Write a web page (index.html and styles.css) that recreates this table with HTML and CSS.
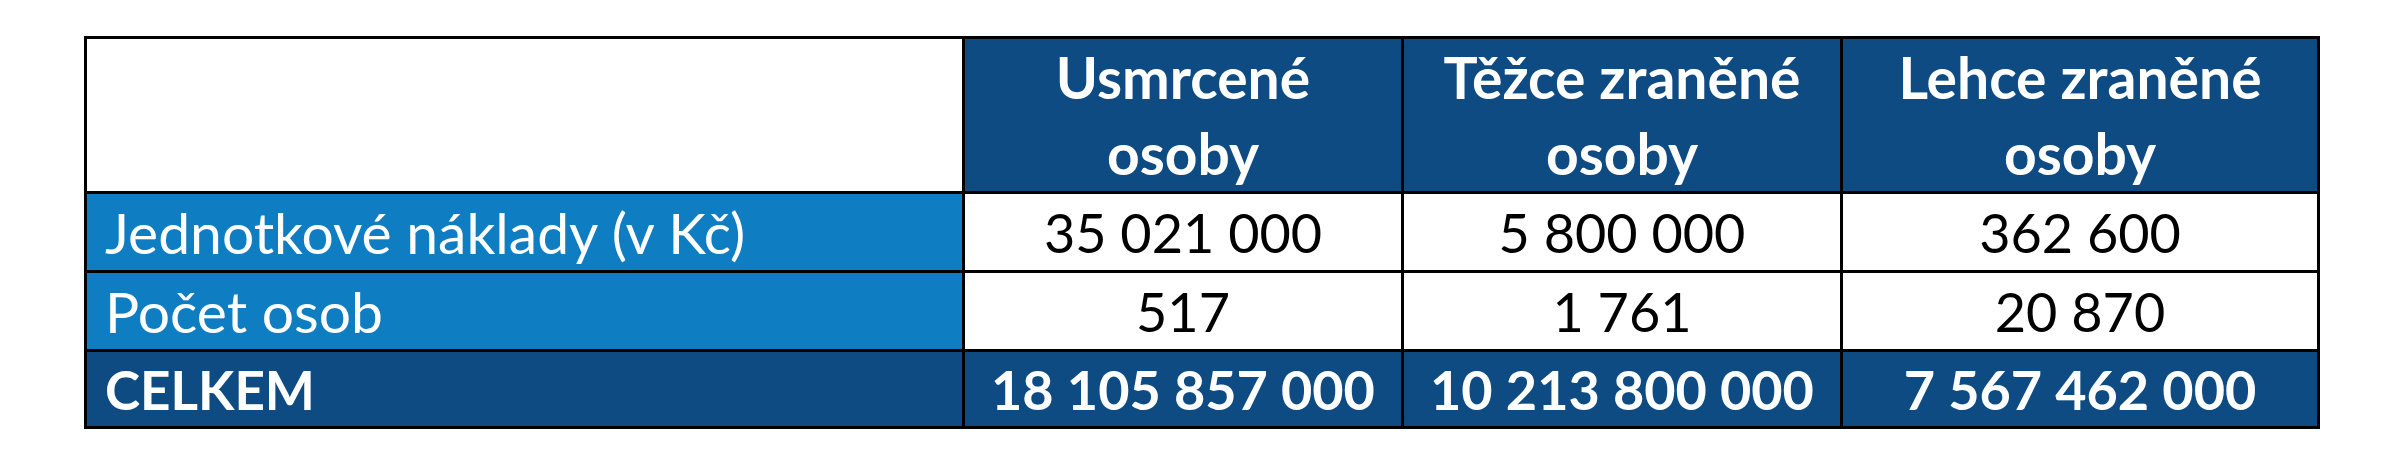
FILE: index.html
```html
<!DOCTYPE html>
<html lang="cs">
<head>
<meta charset="utf-8">
<title>Náklady nehod</title>
<link rel="stylesheet" href="styles.css">
</head>
<body>
<table class="costs">
  <colgroup>
    <col class="c-label">
    <col class="c-val">
    <col class="c-val">
    <col class="c-last">
  </colgroup>
  <thead>
    <tr class="row-head">
      <th class="blank"></th>
      <th>Usmrcené<br>osoby</th>
      <th>Těžce zraněné<br>osoby</th>
      <th>Lehce zraněné<br>osoby</th>
    </tr>
  </thead>
  <tbody>
    <tr class="row-data">
      <th class="label">Jednotkové náklady (v Kč)</th>
      <td>35 021 000</td>
      <td>5 800 000</td>
      <td>362 600</td>
    </tr>
    <tr class="row-data">
      <th class="label">Počet osob</th>
      <td>517</td>
      <td>1 761</td>
      <td>20 870</td>
    </tr>
    <tr class="row-total">
      <th class="label">CELKEM</th>
      <td>18 105 857 000</td>
      <td>10 213 800 000</td>
      <td>7 567 462 000</td>
    </tr>
  </tbody>
</table>
</body>
</html>
```
FILE: styles.css
```css
html, body {
  margin: 0;
  padding: 0;
  background: #ffffff;
}

body {
  padding: 36px 0 0 84px;
}

.costs {
  border-collapse: collapse;
  table-layout: fixed;
  width: 2233px;
  font-family: Lato, "Noto Sans", sans-serif;
  font-size: 54px;
}

.c-label { width: 878px; }
.c-val { width: 439px; }
.c-last { width: 477px; }

.costs th,
.costs td {
  border: 3px solid #000000;
  padding: 0;
  text-align: center;
  vertical-align: middle;
  white-space: nowrap;
}

.row-head { height: 153px; }
.row-head th {
  background: #0f4b83;
  color: #ffffff;
  font-size: 57px;
  font-weight: 700;
  line-height: 76px;
}
.row-head th.blank { background: #ffffff; }

.row-data { height: 79px; }
.row-data td {
  background: #ffffff;
  color: #000000;
  font-weight: 400;
}

.costs th.label {
  text-align: left;
  padding-left: 18px;
  background: #0f7dc2;
  color: #ffffff;
  font-size: 57px;
  font-weight: 400;
}

.row-total { height: 77px; }
.row-total td,
.costs .row-total th.label {
  background: #0f4b83;
  color: #ffffff;
  font-weight: 700;
}
.costs .row-total th.label {
  font-size: 53px;
}
```
